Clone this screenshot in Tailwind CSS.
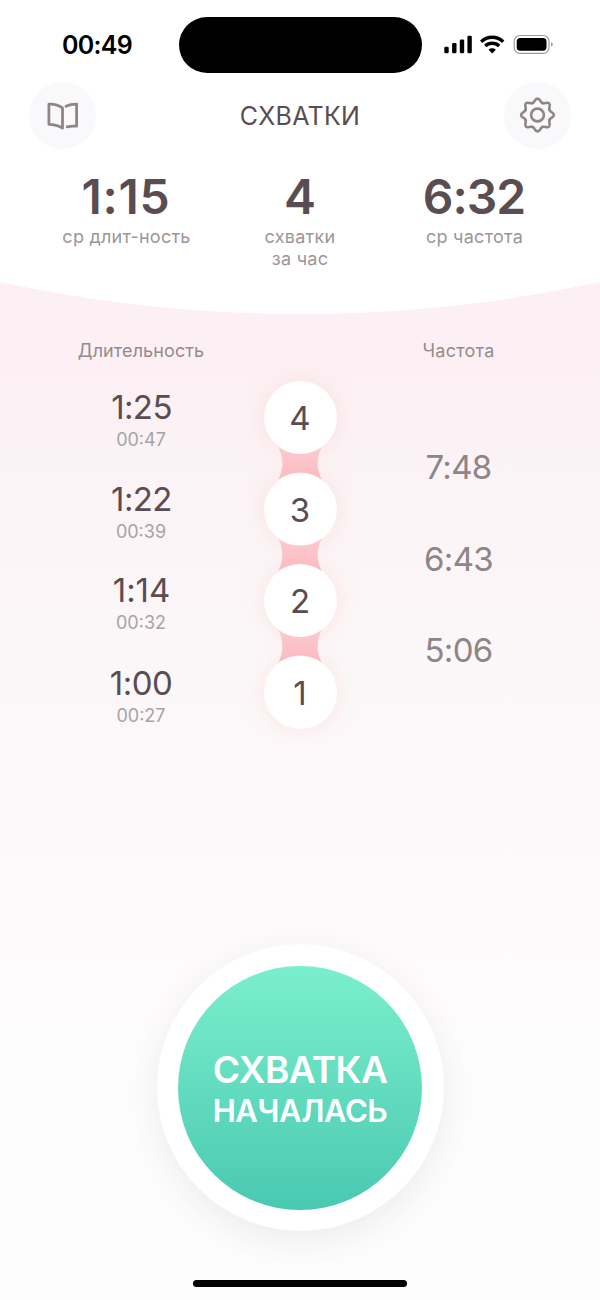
<!DOCTYPE html>
<html lang="ru">
<head>
<meta charset="utf-8">
<title>Схватки</title>
<script src="https://cdn.jsdelivr.net/npm/@tailwindcss/browser@4"></script>
</head>
<body class="w-[600px] h-[1300px] overflow-hidden bg-white">
<main class="relative isolate flex flex-col w-[600px] h-[1300px] overflow-hidden font-['Inter',sans-serif] text-[#5a4d51] bg-linear-to-b from-[#fcf0f4] from-28% via-[#fbf5f7] via-42% to-[#fefdfe] to-85%">

  <header class="relative flex flex-col h-[314px] shrink-0">
    <svg class="absolute inset-0 -z-10" width="600" height="314" viewBox="0 0 600 314"><path fill="#fff" d="M0 0H600V282A1422 1422 0 0 1 0 282Z"/></svg>

    <div class="flex items-start h-[82px] pt-[17px]">
      <div class="w-[179px] h-14 flex items-center pl-[62px] text-black font-semibold text-[25px] leading-none tracking-[-0.700px]">00:49</div>
      <div class="w-[243px] h-14 rounded-full bg-black"></div>
      <svg class="h-14" width="178" height="56" viewBox="422 17 178 56">
        <rect x="444.3" y="46.7" width="4.4" height="6.6" rx="1.2"/>
        <rect x="452.1" y="43" width="4.4" height="10.3" rx="1.2"/>
        <rect x="459.8" y="39.5" width="4.4" height="13.8" rx="1.2"/>
        <rect x="467.4" y="35.7" width="4.4" height="17.6" rx="1.2"/>
        <g fill="none" stroke="#000" stroke-width="3.4">
          <path d="M481.2 41.7A16 16 0 0 1 503.2 41.7"/>
          <path d="M485.2 46A10.2 10.2 0 0 1 499.2 46"/>
        </g>
        <path d="M492.2 53.4L488.6 49.7A5.2 5.2 0 0 1 495.8 49.7Z"/>
        <rect x="514.2" y="35.5" width="34.8" height="17.8" rx="5.8" fill="none" stroke="#9a9a9a" stroke-width="1.2"/>
        <rect x="516.7" y="38" width="29.8" height="12.8" rx="3.6"/>
        <path fill="#9a9a9a" d="M551 42.2C553.4 43 553.4 45.8 551 46.6Z"/>
      </svg>
    </div>

    <div class="flex justify-between items-center h-[67px] px-[29px]">
      <div class="size-[67px] rounded-full bg-[#f9f9fc]">
        <svg width="67" height="67" viewBox="29 82 67 67" fill="none" stroke="#8f8587" stroke-width="2.8" stroke-linecap="round" stroke-linejoin="round">
          <path d="M48.9 104.1C54 103.8 58.5 105 62.5 107.9V128.2C58.5 125.6 54 124.3 48.9 124.3Z"/>
          <path d="M66 106.3C69.2 104.7 72.7 104 76.6 104.1V126.2C73 125.9 70 126 67.2 126.8"/>
        </svg>
      </div>
      <h1 class="text-[25px] leading-none tracking-[0.300px] pt-[2px]">СХВАТКИ</h1>
      <div class="size-[67px] rounded-full bg-[#f9f9fc]">
        <svg width="67" height="67" viewBox="-33.5 -33 67 67" fill="none" stroke="#8f8587" stroke-width="2.6" stroke-linecap="round">
          <circle r="6.4"/>
          <path id="tooth" d="M-4.95 -11.95C-2.3 -12.9 -2.9 -16.4 0 -16.4S2.3 -12.9 4.95 -11.95"/>
          <use href="#tooth" transform="rotate(45)"/><use href="#tooth" transform="rotate(90)"/><use href="#tooth" transform="rotate(135)"/><use href="#tooth" transform="rotate(180)"/><use href="#tooth" transform="rotate(225)"/><use href="#tooth" transform="rotate(270)"/><use href="#tooth" transform="rotate(315)"/>
        </svg>
      </div>
    </div>

    <div class="grid grid-cols-[174px_174px_174px] px-[39px] pt-[21px] text-center">
      <div class="flex flex-col"><div class="h-[53px] leading-[54px] text-[48px] font-semibold tracking-[0.700px]">1:15</div><div class="pt-[3px] text-[18px] leading-[21.500px] tracking-[0.250px] pl-px text-[#9b9697]">ср длит-ность</div></div>
      <div class="flex flex-col"><div class="h-[53px] leading-[54px] text-[48px] font-semibold">4</div><div class="pt-[3px] text-[18px] leading-[21.500px] tracking-[0.250px] text-[#9b9697]">схватки<br>за час</div></div>
      <div class="flex flex-col"><div class="h-[53px] leading-[54px] text-[48px] font-semibold tracking-[-1px]">6:32</div><div class="pt-[3px] text-[18px] leading-[21.500px] tracking-[0.250px] pl-px text-[#9b9697]">ср частота</div></div>
    </div>
  </header>

  <section class="grid grid-cols-[163px_156px_163px] px-[59px] h-[486px] shrink-0 text-center">
    <div class="flex flex-col">
      <h2 class="mt-[25px] h-6 leading-6 text-[18px] tracking-[0.100px] pl-px text-[#948b8e]">Длительность</h2>
      <ul class="mt-[26px]">
        <li class="h-[91.500px]"><div class="h-9 leading-9 text-[33px] tracking-[-0.600px] pl-[2px]">1:25</div><div class="mt-[3px] h-6 leading-6 text-[18px] pl-px text-[#a9a2a5]">00:47</div></li>
        <li class="h-[91.500px]"><div class="h-9 leading-9 text-[33px] tracking-[-0.600px] pl-[2px]">1:22</div><div class="mt-[3px] h-6 leading-6 text-[18px] pl-px text-[#a9a2a5]">00:39</div></li>
        <li class="h-[93px]"><div class="h-9 leading-9 text-[33px] tracking-[-0.100px] pl-[2px]">1:14</div><div class="mt-[3px] h-6 leading-6 text-[18px] pl-px text-[#a9a2a5]">00:32</div></li>
        <li class="h-[91.500px]"><div class="h-9 leading-9 text-[33px] tracking-[-0.500px] pl-px">1:00</div><div class="mt-[3px] h-6 leading-6 text-[18px] pl-px text-[#a9a2a5]">00:27</div></li>
      </ul>
    </div>
    <div class="relative flex flex-col items-center gap-[18.500px] pt-[67px]">
      <div class="size-[73px] rounded-full bg-white shadow-[0_0_22px_rgba(255,190,185,0.32)] leading-[75px] text-[33px]">4</div>
      <div class="size-[73px] rounded-full bg-white shadow-[0_0_22px_rgba(255,190,185,0.32)] leading-[75px] text-[33px]">3</div>
      <div class="size-[73px] rounded-full bg-white shadow-[0_0_22px_rgba(255,190,185,0.32)] leading-[75px] text-[33px]">2</div>
      <div class="size-[73px] rounded-full bg-white shadow-[0_0_22px_rgba(255,190,185,0.32)] leading-[75px] text-[33px]">1</div>
      <svg class="absolute left-0 top-0" width="156" height="486" viewBox="222 314 156 486">
        <defs><linearGradient id="link" x1="0" y1="0" x2="0" y2="1"><stop offset="0" stop-color="#fbcbd0"/><stop offset="1" stop-color="#fcb9c0"/></linearGradient></defs>
        <path id="neck" fill="url(#link)" d="M278.3 446.9Q286.5 463.25 278.3 479.6A36.5 36.5 0 0 1 321.7 479.6Q313.5 463.25 321.7 446.9A36.5 36.5 0 0 1 278.3 446.9Z"/>
        <use href="#neck" y="91.5"/><use href="#neck" y="183"/>
      </svg>
    </div>
    <div class="flex flex-col text-[#8d8587]">
      <h2 class="mt-[25px] h-6 leading-6 text-[18px] tracking-[0.250px] pr-[2px] text-[#948b8e]">Частота</h2>
      <ul class="mt-[86px] text-[33px] tracking-[-0.700px] pr-[2px]">
        <li class="h-[91.500px] leading-9">7:48</li>
        <li class="h-[91.500px] leading-9">6:43</li>
        <li class="h-[91.500px] leading-9">5:06</li>
      </ul>
    </div>
  </section>

  <div class="flex flex-col items-center pt-[144px]">
    <button class="size-[287px] rounded-full bg-white p-[21.500px] shadow-[0_10px_36px_rgba(70,60,65,0.09)]">
      <span class="flex flex-col items-center size-[244px] rounded-full bg-linear-to-b from-[#7aefcd] to-[#49c9b1] pt-[83px] text-white font-semibold">
        <span class="h-[41px] leading-[42px] text-[37px] tracking-[-0.600px]">СХВАТКА</span>
        <span class="h-[42px] leading-[42px] text-[31px] tracking-[-0.400px]">НАЧАЛАСЬ</span>
      </span>
    </button>
    <div class="mt-[49px] w-[214px] h-[7px] rounded-full bg-black"></div>
  </div>
</main>
</body>
</html>
